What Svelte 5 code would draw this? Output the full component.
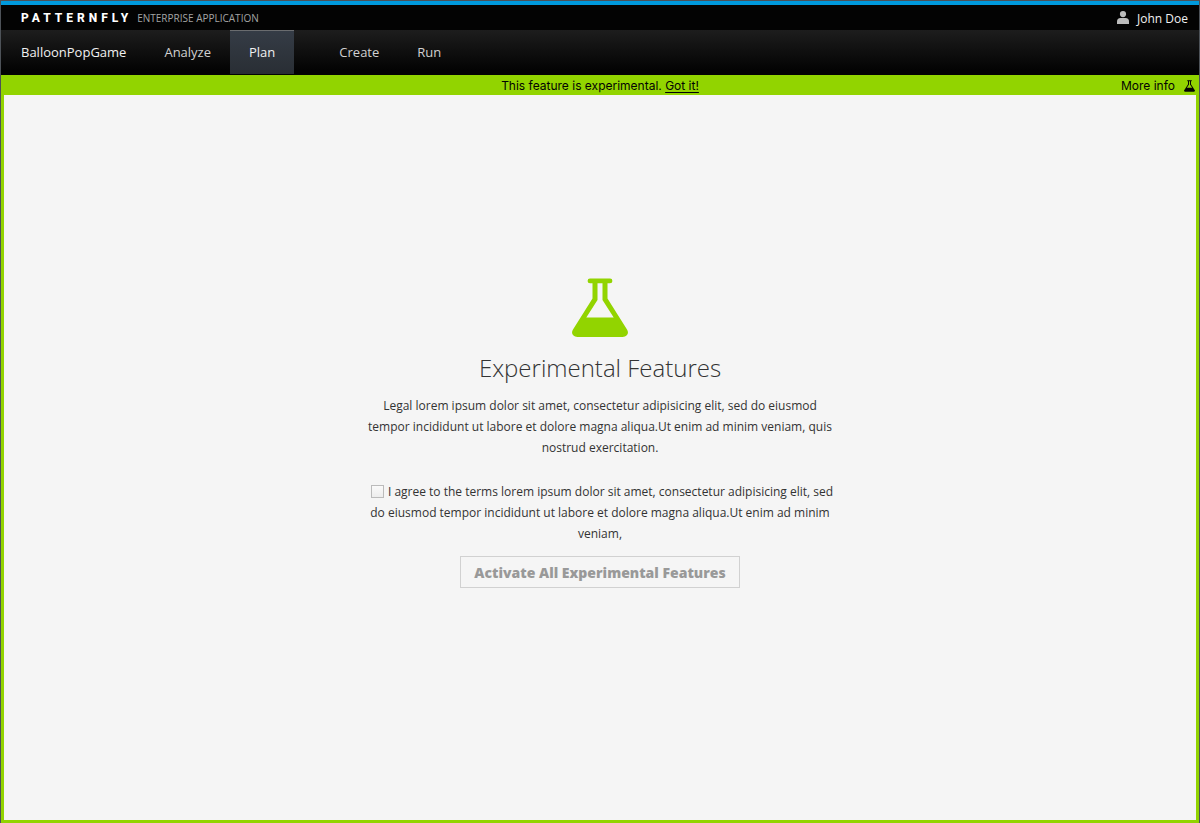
<script>
  let agreed = $state(false);
  let bannerVisible = $state(true);
  const links = ['Analyze', 'Plan', 'Create', 'Run'];
  let current = $state('Plan');
</script>

{#snippet flask()}
  <svg class="flask" viewBox="0 0 56 60" aria-hidden="true">
    <path
      fill="currentColor"
      fill-rule="evenodd"
      d="M18 0.5H38Q40.4 0.5 40.4 2.9T38 5.3H35.5V20.5L55 51.5Q57 55 54.8 57.3Q53.3 59 50.5 59H5.5Q2.7 59 1.2 57.3Q-1 55 1 51.5L20.5 20.5V5.3H18Q15.6 5.3 15.6 2.9T18 0.5ZM25.5 5.3V22L14.3 39.5H41.7L30.5 22V5.3Z"
    />
  </svg>
{/snippet}

<div class="page">
  <header>
    <div class="masthead">
      <a class="brand" href="#home">
        <span class="logo">PATTERNFLY</span>
        <span class="product">ENTERPRISE APPLICATION</span>
      </a>
      <a class="user" href="#account">
        <svg viewBox="0 0 12 13" aria-hidden="true">
          <circle cx="6" cy="3.1" r="3.1" fill="currentColor" />
          <path fill="currentColor" d="M0 13V10.5Q0 7 3.5 7H8.5Q12 7 12 10.5V13Z" />
        </svg>
        John Doe
      </a>
    </div>
    <nav>
      <a class="project" href="#project">BalloonPopGame</a>
      <ul>
        {#each links as link}
          <li>
            <a
              href="#{link.toLowerCase()}"
              class:active={current === link}
              aria-current={current === link ? 'page' : undefined}
              onclick={() => (current = link)}>{link}</a>
          </li>
        {/each}
      </ul>
    </nav>
  </header>

  <main>
    {#if bannerVisible}
      <div class="banner">
        <p>
          This feature is experimental.
          <button class="dismiss" onclick={() => (bannerVisible = false)}>Got it!</button>
        </p>
        <a class="more" href="#more">More info {@render flask()}</a>
      </div>
    {/if}
    <section>
      <div class="hero">{@render flask()}</div>
      <h1>Experimental Features</h1>
      <p class="legal">
        Legal lorem ipsum dolor sit amet, consectetur adipisicing elit, sed do eiusmod tempor
        incididunt ut labore et dolore magna aliqua.Ut enim ad minim veniam, quis nostrud
        exercitation.
      </p>
      <label class="terms">
        <input type="checkbox" bind:checked={agreed} />I agree to the terms lorem ipsum dolor sit
        amet, consectetur adipisicing elit, sed do eiusmod tempor incididunt ut labore et dolore
        magna aliqua.Ut enim ad minim veniam,
      </label>
      <button class="activate" disabled={!agreed}>Activate All Experimental Features</button>
    </section>
  </main>
</div>

<style>
  :global(body) {
    margin: 0;
  }
  .page {
    box-sizing: border-box;
    min-height: 100vh;
    display: flex;
    flex-direction: column;
    border: 1px solid #4d5258;
    border-bottom: 0;
    background: #f5f5f5;
    color: #333;
    font: 12px/21px 'Open Sans', sans-serif;
  }
  a {
    color: inherit;
    text-decoration: none;
  }
  p,
  h1,
  ul {
    margin: 0;
    padding: 0;
  }
  .flask {
    display: block;
  }

  .masthead {
    box-sizing: border-box;
    display: flex;
    align-items: center;
    justify-content: space-between;
    height: 29px;
    padding: 2px 11px 0 20px;
    border-top: 4px solid #0099dd;
    background: #030303;
  }
  .brand {
    display: flex;
    align-items: center;
    gap: 5px;
  }
  .logo {
    color: #fff;
    font: 800 12px/21px Roboto, sans-serif;
    letter-spacing: 4px;
  }
  .product {
    color: #a4a4a4;
    font-size: 10px;
  }
  .user {
    display: flex;
    align-items: center;
    gap: 8px;
    color: #f1f1f1;
  }
  .user svg {
    width: 12px;
    height: 13px;
    margin-bottom: 2px;
    color: #bbb;
  }
  nav {
    display: flex;
    align-items: stretch;
    height: 45px;
    padding-left: 20px;
    background: linear-gradient(#1d1d1d, #030303 90%);
    color: #d1d1d1;
    font-size: 13px;
    line-height: 44px;
  }
  .project {
    margin-right: 19px;
    color: #f1f1f1;
  }
  ul {
    display: flex;
    list-style: none;
  }
  li a {
    box-sizing: border-box;
    display: block;
    height: 44px;
    padding: 0 19px;
    border-top: 1px solid transparent;
    line-height: 42px;
  }
  li:nth-child(3) {
    margin-left: 26px;
  }
  li .active {
    border-color: #6a6c6f;
    background: linear-gradient(#353c46, #292e34);
    color: #f1f1f1;
  }

  main {
    flex: 1;
    display: flex;
    flex-direction: column;
    border: 3px solid #92d400;
    border-top: 0;
  }
  .banner {
    display: grid;
    grid-template-columns: 1fr auto 1fr;
    height: 20px;
    background: #92d400;
    color: #030303;
    font: 12px/22px Inter, sans-serif;
  }
  .banner p {
    grid-column: 2;
  }
  .dismiss {
    padding: 0;
    border: 0;
    background: none;
    color: inherit;
    font: inherit;
    text-decoration: underline;
    text-underline-offset: 2px;
    cursor: pointer;
  }
  .more {
    display: flex;
    align-items: center;
    justify-content: flex-end;
    gap: 9px;
    padding-right: 1px;
  }
  .more .flask {
    width: 11px;
    height: 12px;
  }

  section {
    flex: 1;
    display: flex;
    flex-direction: column;
    align-items: center;
    justify-content: center;
    padding: 24px 24px 74px;
    text-align: center;
  }
  .hero {
    color: #92d400;
  }
  .hero .flask {
    width: 56px;
    height: 60px;
  }
  h1 {
    margin: 14px 0 11px;
    font-size: 24px;
    font-weight: 300;
    line-height: 32px;
  }
  .legal,
  .terms {
    max-width: 470px;
  }
  .terms {
    margin: 23px 0 12px;
  }
  input {
    appearance: none;
    box-sizing: border-box;
    width: 13px;
    height: 13px;
    margin: 0 4px;
    border: 1px solid #bbb;
    background: linear-gradient(#fafafa, #ededed);
    vertical-align: -2px;
  }
  input:checked {
    background: #0099dd;
  }
  .activate {
    height: 32px;
    padding: 2px 13px 0;
    border: 1px solid #0085cf;
    background: #0099dd;
    color: #fff;
    font: 800 14px/28px 'Open Sans', sans-serif;
  }
  .activate:disabled {
    border-color: #d1d1d1;
    background: #f5f5f5;
    color: #999;
  }
</style>
